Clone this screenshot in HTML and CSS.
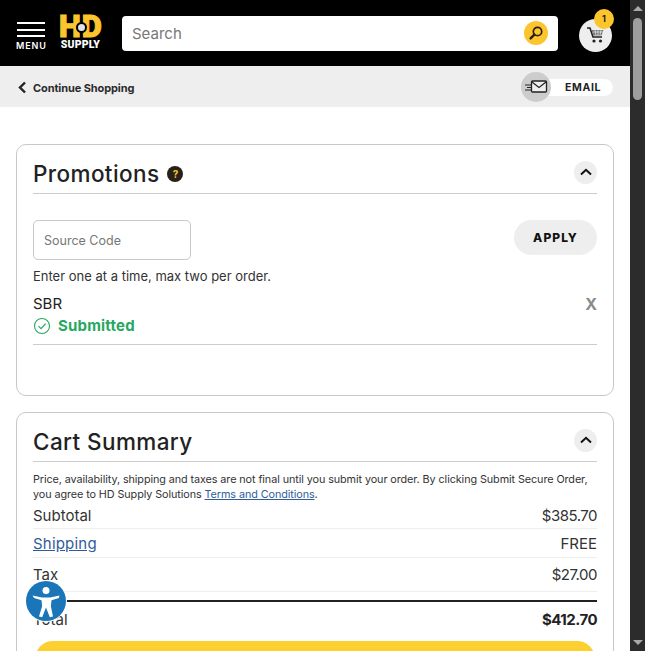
FILE: index.html
```html
<!DOCTYPE html>
<html lang="en">
<head>
    <meta charset="UTF-8">
    <meta name="viewport" content="width=device-width, initial-scale=1.0">
    <title>Cart - HD Supply</title>
    <link rel="stylesheet" href="styles.css">
</head>
<body>
    <div class="page">
        <header class="topbar">
            <div class="menu">
                <div class="burger"><span></span><span></span><span></span></div>
                <div class="menu-label">MENU</div>
            </div>
            <div class="logo">
                <div class="logo-hd"><span>H</span><i></i><span>D</span></div>
                <div class="logo-supply">SUPPLY</div>
            </div>
            <div class="search">
                <span class="search-text">Search</span>
                <span class="search-btn">
                    <svg width="16" height="16" viewBox="0 0 16 16"><circle cx="9.500" cy="6.500" r="4.200" fill="none" stroke="#2a2113" stroke-width="1.700"/><path d="M6.400 9.600 2.600 13.400" stroke="#2a2113" stroke-width="2.400" stroke-linecap="round"/></svg>
                </span>
            </div>
            <div class="cart">
                <svg width="20" height="18" viewBox="0 0 20 18"><path d="M1 2h3l3 9h9" fill="none" stroke="#222" stroke-width="1.600"/><path d="M5.500 4h12l-2 5.500H7.500z" fill="#777"/><path d="M7 6h10M9 4l1 5.500M12 4v5.500M15 4l-1 5.500" stroke="#fff" stroke-width=".6"/><circle cx="8" cy="15" r="1.600" fill="#222"/><circle cx="14.500" cy="15" r="1.600" fill="#222"/></svg>
                <span class="cart-count">1</span>
            </div>
        </header>

        <div class="subbar">
            <a class="back">
                <svg width="9" height="13" viewBox="0 0 9 13"><path d="M7 1.500 2 6.500l5 5" fill="none" stroke="#222" stroke-width="2.400"/></svg>
                Continue Shopping
            </a>
            <div class="email">
                <span class="email-label">EMAIL</span>
                <span class="email-icon">
                    <svg width="24" height="16" viewBox="0 0 24 16"><rect x="7.500" y="2" width="15" height="11" rx="1" fill="#eee" stroke="#222" stroke-width="1.300"/><path d="m8 3 7 5.500L22 3" fill="none" stroke="#222" stroke-width="1.200"/><path d="M1 6h6M3 8.500h5M1 11h6" stroke="#222" stroke-width="1.200"/></svg>
                </span>
            </div>
        </div>

        <main class="content">
            <section class="card card-promo">
                <div class="card-head">
                    <h2>Promotions</h2>
                    <span class="help">?</span>
                    <span class="toggle"><svg width="12" height="8" viewBox="0 0 12 8"><path d="M1 6.500 6 1.800l5 4.700" fill="none" stroke="#111" stroke-width="2"/></svg></span>
                </div>
                <div class="promo-form">
                    <div class="source-code">Source Code</div>
                    <button class="apply">APPLY</button>
                </div>
                <p class="hint">Enter one at a time, max two per order.</p>
                <div class="code-row">
                    <div>
                        <div class="code-name">SBR</div>
                        <div class="code-status">
                            <svg width="18" height="18" viewBox="0 0 18 18"><circle cx="9" cy="9" r="7.500" fill="none" stroke="#27a85f" stroke-width="1.100"/><path d="m5.500 9.200 2.500 2.500 4.700-5" fill="none" stroke="#27a85f" stroke-width="1.200"/></svg>
                            Submitted
                        </div>
                    </div>
                    <span class="remove">X</span>
                </div>
            </section>

            <section class="card card-summary">
                <div class="card-head">
                    <h2>Cart Summary</h2>
                    <span class="toggle"><svg width="12" height="8" viewBox="0 0 12 8"><path d="M1 6.500 6 1.800l5 4.700" fill="none" stroke="#111" stroke-width="2"/></svg></span>
                </div>
                <p class="terms">Price, availability, shipping and taxes are not final until you submit your order. By clicking Submit Secure Order, you agree to HD Supply Solutions <a>Terms and Conditions</a>.</p>
                <div class="row row-subtotal"><span>Subtotal</span><span class="amount">$385.70</span></div>
                <div class="row row-shipping"><a>Shipping</a><span>FREE</span></div>
                <div class="row row-tax"><span>Tax</span><span class="amount">$27.00</span></div>
                <div class="row row-total"><span>Total</span><strong class="amount">$412.70</strong></div>
                <button class="submit"></button>
            </section>
        </main>

        <div class="a11y">
            <svg width="34" height="34" viewBox="0 0 34 34"><circle cx="17" cy="6.500" r="3.500" fill="#fff"/><path d="M3.500 11.500 13 13.500h8l9.500-2-.6 2.600-7.400 2.200-.6 6L24 32.500l-3.200.7L17 23.500l-3.800 9.700-3.200-.7 3.100-10.200-.6-6-7.400-2.200z" fill="#fff"/></svg>
        </div>
    </div>

    <div class="scrollbar">
        <span class="arrow arrow-up"></span>
        <span class="thumb"></span>
        <span class="arrow arrow-down"></span>
    </div>
</body>
</html>
```

FILE: styles.css
```css
html, body {
    margin: 0;
    height: 651px;
    overflow: hidden;
}
body {
    display: flex;
    font-family: "Inter", "Liberation Sans", sans-serif;
    color: #222;
    background: #fff;
}
.page {
    width: 630px;
    height: 651px;
    overflow: hidden;
    flex: none;
}

/* top black bar */
.topbar {
    height: 66px;
    background: #000;
    display: flex;
    align-items: center;
    padding-left: 16px;
    box-sizing: border-box;
}
.menu {
    width: 30px;
    flex: none;
    align-self: flex-start;
    padding-top: 22px;
}
.burger span {
    display: block;
    height: 2px;
    width: 28px;
    background: #fff;
    margin: 0 0 4.500px 1px;
}
.burger span:last-child {
    margin-bottom: 0;
}
.menu-label {
    font-size: 9px;
    font-weight: 600;
    letter-spacing: 0.9px;
    color: #fff;
    margin-top: 3px;
}
.logo {
    width: 43px;
    flex: none;
    margin-left: 13px;
    font-family: "Roboto", "Liberation Sans", sans-serif;
    font-weight: 900;
}
.logo-hd {
    display: flex;
    align-items: center;
    justify-content: center;
    height: 22px;
    font-size: 31px;
    line-height: 22px;
    color: #fcc52d;
    -webkit-text-stroke: 1px #fcc52d;
}
.logo-hd i {
    width: 7px;
    height: 7px;
    border-radius: 50%;
    background: #dfe3e6;
    margin: 0 -3px;
    z-index: 1;
    box-shadow: 0 0 0 2px #000;
}
.logo-supply {
    font-size: 10.500px;
    letter-spacing: 0.2px;
    line-height: 11px;
    color: #fff;
    margin-top: 1px;
    text-align: center;
}
.search {
    width: 436px;
    height: 35px;
    flex: none;
    margin-left: 20px;
    background: #fff;
    border-radius: 4px;
    display: flex;
    align-items: center;
    justify-content: space-between;
    padding: 1px 10px 0 10px;
    box-sizing: border-box;
}
.search-text {
    font-size: 15px;
    color: #777;
}
.search-btn {
    width: 24px;
    height: 24px;
    margin-top: -1px;
    border-radius: 50%;
    background: #fcc52d;
    display: flex;
    align-items: center;
    justify-content: center;
}
.cart {
    width: 33px;
    height: 33px;
    border-radius: 50%;
    background: #eee;
    margin-left: 21px;
    margin-top: 4px;
    position: relative;
    display: flex;
    align-items: center;
    justify-content: center;
    flex: none;
}
.cart-count {
    position: absolute;
    top: -9.500px;
    right: -2px;
    width: 20px;
    height: 20px;
    border-radius: 50%;
    background: #fcc52d;
    font-size: 9px;
    font-weight: 700;
    line-height: 20px;
    text-align: center;
    color: #222;
}

/* continue shopping / email */
.subbar {
    height: 41px;
    background: #eee;
    display: flex;
    align-items: center;
    justify-content: space-between;
    padding: 0 17px 0 18px;
}
.back {
    display: flex;
    align-items: center;
    gap: 6px;
    font-size: 11px;
    font-weight: 700;
    letter-spacing: -0.1px;
    color: #2b2b2b;
    margin-top: 2px;
}
.email {
    position: relative;
    width: 78px;
    height: 17px;
    background: #fff;
    border-radius: 9px;
    margin-top: 1px;
}
.email-label {
    position: absolute;
    right: 12px;
    top: 0;
    line-height: 18px;
    font-size: 10.500px;
    font-weight: 700;
    letter-spacing: 0.6px;
}
.email-icon {
    position: absolute;
    left: -14px;
    top: -7px;
    width: 30px;
    height: 30px;
    border-radius: 50%;
    background: #ccc;
    display: flex;
    align-items: center;
    justify-content: center;
}

/* cards */
.content {
    padding: 37px 16px 0 16px;
}
.card {
    border: 1px solid #c8c8c8;
    border-radius: 10px;
    padding: 0 16px;
    background: #fff;
}
.card-promo {
    height: 252px;
    box-sizing: border-box;
    margin-bottom: 16px;
}
.card-head {
    height: 49px;
    padding-top: 6px;
    display: flex;
    align-items: center;
    border-bottom: 1px solid #ccc;
    box-sizing: border-box;
}
.card-head h2 {
    margin: 2px 0 0;
    font-size: 22.500px;
    font-weight: 500;
    color: #222;
    letter-spacing: 0.4px;
}
.help {
    width: 16px;
    height: 16px;
    border-radius: 50%;
    background: #26211a;
    color: #fcc52d;
    font-size: 10px;
    font-weight: 700;
    line-height: 16px;
    text-align: center;
    margin-left: 8px;
    margin-top: 3px;
}
.toggle {
    width: 23px;
    height: 23px;
    border-radius: 50%;
    background: #eee;
    margin-left: auto;
    display: flex;
    align-items: center;
    justify-content: center;
}
.promo-form {
    display: flex;
    justify-content: space-between;
    margin-top: 26px;
}
.source-code {
    width: 158px;
    height: 40px;
    box-sizing: border-box;
    border: 1px solid #c8c8c8;
    border-radius: 5px;
    padding-left: 10px;
    font-size: 12.500px;
    line-height: 40px;
    color: #777;
}
.apply {
    width: 83px;
    height: 35px;
    border: none;
    border-radius: 18px;
    background: #eee;
    font-family: inherit;
    font-size: 12px;
    font-weight: 800;
    letter-spacing: 1.100px;
    color: #111;
}
.hint {
    margin: 8px 0 0;
    font-size: 13px;
    line-height: 16px;
    color: #333;
}
.code-row {
    display: flex;
    justify-content: space-between;
    align-items: flex-start;
    margin-top: 10px;
    height: 50px;
    border-bottom: 1px solid #ccc;
}
.code-name {
    font-size: 15px;
    line-height: 19px;
}
.code-status {
    display: flex;
    align-items: center;
    gap: 7px;
    margin-top: 3px;
    font-size: 15px;
    letter-spacing: 0.2px;
    font-weight: 700;
    color: #27a85f;
}
.remove {
    font-size: 16px;
    font-weight: 700;
    color: #8a8a8a;
}
.terms {
    margin: 10px 0 0;
    font-size: 10.800px;
    letter-spacing: -0.08px;
    line-height: 15px;
    color: #333;
}
.terms a, .row a {
    color: #2f5d9b;
    text-decoration: underline;
}
.row {
    display: flex;
    justify-content: space-between;
    align-items: center;
    font-size: 15px;
    color: #333;
    border-bottom: 1px solid #eee;
}
.row a {
    letter-spacing: 0.2px;
}
.amount {
    letter-spacing: -0.5px;
}
.row-subtotal {
    height: 26px;
}
.row-shipping {
    height: 28px;
}
.row-tax {
    height: 33px;
    margin-bottom: 8px;
}
.row-total {
    height: 36px;
    border-top: 2px solid #222;
    border-bottom: none;
    box-sizing: border-box;
}
.row-total strong {
    font-weight: 700;
    color: #222;
}
.submit {
    display: block;
    width: 560px;
    height: 36px;
    margin: 5px 0 0 2px;
    border: none;
    border-radius: 24px;
    background: #fcd12f;
}

/* accessibility widget sits over the page */
.a11y {
    position: fixed;
    left: 26px;
    top: 581px;
    width: 40px;
    height: 40px;
    border-radius: 50%;
    background: #1a76b8;
    box-shadow: 0 0 0 1px #fff;
    display: flex;
    align-items: center;
    justify-content: center;
}

/* scrollbar */
.scrollbar {
    width: 15px;
    height: 651px;
    flex: none;
    background: #2c2c2c;
    display: flex;
    flex-direction: column;
    align-items: center;
}
.arrow {
    width: 0;
    height: 0;
    border-left: 5px solid transparent;
    border-right: 5px solid transparent;
}
.arrow-up {
    border-bottom: 5px solid #a8a8a8;
    margin-top: 6px;
}
.thumb {
    width: 9px;
    height: 82px;
    border-radius: 5px;
    background: #9e9e9e;
    margin-top: 7px;
}
.arrow-down {
    border-top: 5px solid #a8a8a8;
    margin-top: auto;
    margin-bottom: 6px;
}
```
